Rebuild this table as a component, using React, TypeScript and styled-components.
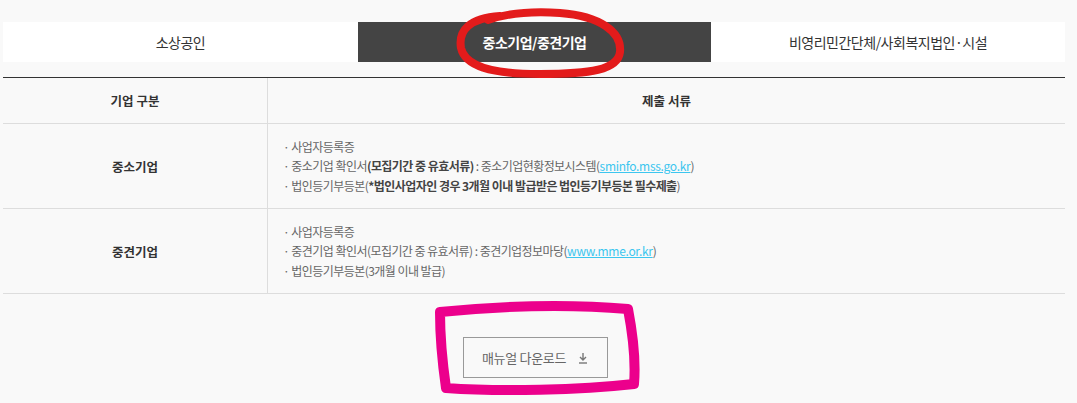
import React from "react";
import styled, { createGlobalStyle } from "styled-components";

const Global = createGlobalStyle`
  html, body { margin: 0; padding: 0; background: #f9f9f9; }
  body { font-family: "Noto Sans CJK KR", "Noto Sans", sans-serif; color: #333; }
`;

const Page = styled.div`
  position: relative;
  width: 1077px;
  height: 403px;
  padding: 22px 0 0 3px;
  box-sizing: border-box;
  overflow: hidden;
`;

const Tabs = styled.div`
  display: grid;
  grid-template-columns: 355px 353px 354px;
  width: 1062px;
  height: 40px;
`;

const Tab = styled.div<{ $active?: boolean }>`
  display: flex;
  align-items: center;
  justify-content: center;
  background: ${(p) => (p.$active ? "#444" : "#fff")};
  color: ${(p) => (p.$active ? "#fff" : "#333")};
  font-size: 14px;
  font-weight: ${(p) => (p.$active ? 700 : 400)};
  letter-spacing: -0.5px;
`;

const Table = styled.div`
  margin-top: 15px;
  width: 1062px;
  border-top: 1px solid #333;
`;

const Row = styled.div<{ $h: number }>`
  display: grid;
  grid-template-columns: 265px 1fr;
  height: ${(p) => p.$h}px;
  border-bottom: 1px solid #ddd;
`;

const Label = styled.div`
  display: flex;
  align-items: center;
  justify-content: center;
  border-right: 1px solid #ddd;
  font-size: 12.5px;
  font-weight: 700;
  color: #333;
`;

const HeadCell = styled.div`
  display: flex;
  align-items: center;
  justify-content: center;
  font-size: 12.5px;
  font-weight: 700;
  color: #333;
`;

const Content = styled.div`
  display: flex;
  flex-direction: column;
  justify-content: center;
  padding-left: 15px;
  font-size: 12px;
  line-height: 19.5px;
  color: #666;
  letter-spacing: -0.55px;
`;

const B = styled.b`
  font-weight: 700;
  color: #444;
`;

const Link = styled.a`
  color: #3cc6ef;
  text-decoration: underline;
  letter-spacing: -0.3px;
`;

const ButtonWrap = styled.div`
  display: flex;
  justify-content: center;
  width: 1064px;
  margin-top: 43px;
`;

const Button = styled.button`
  display: flex;
  align-items: center;
  justify-content: center;
  gap: 12px;
  width: 145px;
  height: 41px;
  background: transparent;
  border: 1px solid #999;
  font-family: inherit;
  font-size: 13px;
  color: #666;
  letter-spacing: -0.3px;
  padding: 0;
`;

const Overlay = styled.svg`
  position: absolute;
  left: 0;
  top: 0;
  pointer-events: none;
`;

const DownIcon = () => (
  <svg width="10" height="12" viewBox="0 0 10 12">
    <path d="M5 1v7M2 5l3 3 3-3" stroke="#777" strokeWidth="1.4" fill="none" />
    <path d="M1 11h8" stroke="#777" strokeWidth="1.4" />
  </svg>
);

export default function App() {
  return (
    <>
      <Global />
      <Page>
        <Tabs>
          <Tab>소상공인</Tab>
          <Tab $active>중소기업/중견기업</Tab>
          <Tab>비영리민간단체/사회복지법인·시설</Tab>
        </Tabs>
        <Table>
          <Row $h={45}>
            <Label>기업 구분</Label>
            <HeadCell>제출 서류</HeadCell>
          </Row>
          <Row $h={84}>
            <Label>중소기업</Label>
            <Content>
              <div>· 사업자등록증</div>
              <div>
                · 중소기업 확인서<B>(모집기간 중 유효서류)</B> : 중소기업현황정보시스템(
                <Link>sminfo.mss.go.kr</Link>)
              </div>
              <div>
                · 법인등기부등본(<B>*법인사업자인 경우 3개월 이내 발급받은 법인등기부등본 필수제출</B>)
              </div>
            </Content>
          </Row>
          <Row $h={84}>
            <Label>중견기업</Label>
            <Content>
              <div>· 사업자등록증</div>
              <div>
                · 중견기업 확인서(모집기간 중 유효서류) : 중견기업정보마당(<Link>www.mme.or.kr</Link>)
              </div>
              <div>· 법인등기부등본(3개월 이내 발급)</div>
            </Content>
          </Row>
        </Table>
        <ButtonWrap>
          <Button>
            매뉴얼 다운로드 <DownIcon />
          </Button>
        </ButtonWrap>
        <Overlay width="1077" height="403" viewBox="0 0 1077 403">
          <path
            d="M500 16 C470 18 458 30 461 48 C465 66 490 74 540 74 C590 74 618 70 620 52 C622 32 600 16 560 13 C530 11 505 14 488 20"
            stroke="#e31b1b"
            strokeWidth="8"
            fill="none"
            strokeLinecap="round"
          />
          <path
            d="M440 312 C500 306 570 304 628 309 C632 330 636 360 634 384 C580 390 500 392 446 388 C442 360 440 330 440 312 Z"
            stroke="#ec008c"
            strokeWidth="10"
            fill="none"
            strokeLinejoin="round"
          />
        </Overlay>
      </Page>
    </>
  );
}
